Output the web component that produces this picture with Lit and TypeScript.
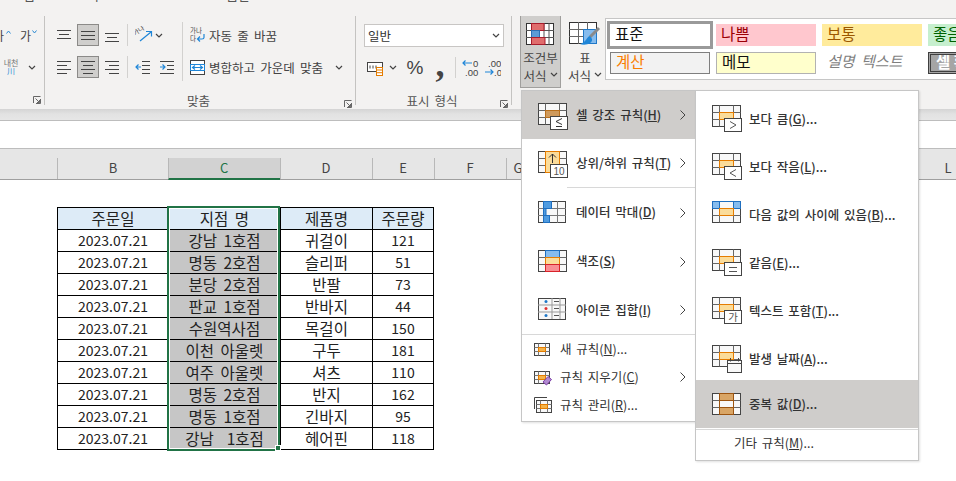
import { LitElement, html, css, svg } from 'lit';
import { customElement } from 'lit/decorators.js';

const rows = [
  ['강남 1호점', '귀걸이', '121'],
  ['명동 2호점', '슬리퍼', '51'],
  ['분당 2호점', '반팔', '73'],
  ['판교 1호점', '반바지', '44'],
  ['수원역사점', '목걸이', '150'],
  ['이천 아울렛', '구두', '181'],
  ['여주 아울렛', '셔츠', '110'],
  ['명동 2호점', '반지', '162'],
  ['명동 1호점', '긴바지', '95'],
  ['강남  1호점', '헤어핀', '118'],
];

const ORANGE = '#e57c00';
const PALE = '#fbdc9a';

// base 3x3 sheet icon, cells are 7/14/7 wide
const sheet = (y = 0) => svg`
  <g transform="translate(0.5 ${y + 0.5})">
    <rect width="28" height="21" fill="#f8f8f8" stroke="#444"></rect>
    <path d="M7 0V21M21 0V21M0 7H28M0 14H28" stroke="#666" fill="none"></path>
  </g>`;

const cell = (fill: string, stroke: string, y = 0) => svg`
  <rect x="7.5" y="${y + 7.5}" width="14" height="7" fill="${fill}" stroke="${stroke}"></rect>`;

const badge = (inner: unknown) => svg`
  <rect x="12.5" y="13.5" width="17" height="13" fill="#fff" stroke="#444"></rect>${inner}`;

const ltMark = svg`<path d="M24 16.5L18 20L24 23.5" fill="none" stroke="#555"></path>`;
const gtMark = svg`<path d="M18 16.5L24 20L18 23.5" fill="none" stroke="#555"></path>`;
const eqMark = svg`<path d="M17 18.5H25M17 22.5H25" fill="none" stroke="#555"></path>`;
const calMark = svg`
  <rect x="15.5" y="15.5" width="14" height="12" fill="#f8f8f8" stroke="#444"></rect>
  <path d="M15.5 18.5H29.5M18.5 13V16.5M26.5 13V16.5" fill="none" stroke="#444"></path>`;

const icon = (body: unknown) => html`<svg class="ic" viewBox="0 0 30 28" width="30" height="28">${body}</svg>`;

const icons: Record<string, unknown> = {
  highlight: icon(svg`${sheet()}${cell('#cf9a5c', '#b86f1c')}${badge(svg`
    <path d="M24 15.5L18 18.5L24 21.5M18 23.5H24" fill="none" stroke="#333"></path>`)}`),
  top: icon(svg`${sheet()}
    <rect x="7.5" y="0.5" width="14" height="21" fill="${PALE}" stroke="${ORANGE}"></rect>
    <path d="M14.5 12V3M11 6.5L14.5 3L18 6.5" fill="none" stroke="#333"></path>
    <rect x="12.5" y="13.5" width="17" height="13" fill="#fff" stroke="#444"></rect>
    <text x="21" y="24" font-size="10" text-anchor="middle" fill="#555" font-family="Liberation Sans">10</text>`),
  bars: icon(svg`
    <rect x="0.5" y="0.5" width="27" height="21" fill="#f8f8f8" stroke="#444"></rect>
    <path d="M5.5 0V22M19.5 0V22M0 7.5H28M0 14.5H28" stroke="#777" fill="none"></path>
    <rect x="5.5" y="0.5" width="8" height="7" fill="#4f9be0" stroke="#1f6fc0"></rect>
    <rect x="5.5" y="7.5" width="2.5" height="7" fill="#4f9be0" stroke="#1f6fc0"></rect>
    <rect x="5.5" y="14.5" width="6" height="7" fill="#4f9be0" stroke="#1f6fc0"></rect>`),
  scale: icon(svg`${sheet()}
    <rect x="7.5" y="0.5" width="14" height="7" fill="#86bcee" stroke="#1f6fc0"></rect>
    ${cell(PALE, ORANGE)}
    <rect x="7.5" y="14.5" width="14" height="7" fill="#f88e93" stroke="#d8232a"></rect>`),
  iconset: icon(svg`
    <rect x="0.5" y="0.5" width="27" height="21" fill="#f8f8f8" stroke="#444"></rect>
    <path d="M14 0V21M22 0V21M0 7H28M0 14H28" stroke="#999" fill="none"></path>
    <circle cx="8" cy="3.5" r="1.5" fill="#1f78c8"></circle>
    <circle cx="8" cy="10.5" r="1.5" fill="#e03030"></circle>
    <circle cx="8" cy="17.5" r="1.5" fill="#1f78c8"></circle>
    <path d="M16 3.5H21M16 10.5H21M16 17.5H21" stroke="#555"></path>`),
  gt: icon(svg`${sheet()}${cell(PALE, ORANGE)}${badge(gtMark)}`),
  lt: icon(svg`${sheet()}${cell(PALE, ORANGE)}${badge(ltMark)}`),
  between: icon(svg`${sheet()}
    <rect x="0.5" y="0.5" width="7" height="7" fill="#86bcee" stroke="#1f6fc0"></rect>
    <rect x="21.5" y="0.5" width="7" height="7" fill="#86bcee" stroke="#1f6fc0"></rect>
    <path d="M7.5 .5H21.5" stroke="#1f6fc0"></path>
    ${cell(PALE, ORANGE)}`),
  eq: icon(svg`${sheet()}${cell(PALE, ORANGE)}${badge(eqMark)}`),
  text: icon(svg`${sheet()}${cell(PALE, ORANGE)}${badge(svg`
    <text x="21" y="24" font-size="10.5" text-anchor="middle" fill="#555" font-family="Noto Sans CJK KR">가</text>`)}`),
  date: icon(svg`${sheet()}${cell(PALE, ORANGE)}${calMark}`),
  dup: icon(svg`${sheet(3)}
    <rect x="7.5" y="3.5" width="14" height="7" fill="#d9a565" stroke="#9c5410"></rect>
    <rect x="7.5" y="17.5" width="14" height="7" fill="#d9a565" stroke="#9c5410"></rect>
    <path d="M7.5 10.5V17.5M21.5 10.5V17.5" stroke="#9c5410"></path>`),
};

const small = (body: unknown) => html`<svg class="ic" viewBox="0 0 18 17" width="18" height="17">${body}</svg>`;
const smallGrid = svg`
  <rect x="0.5" y="2.5" width="15" height="12" fill="#f8f8f8" stroke="#444"></rect>
  <path d="M4.5 2.5V14.5M11.5 2.5V14.5M.5 6.5H15.5M.5 10.5H15.5" stroke="#777" fill="none"></path>
  <rect x="4.5" y="6.5" width="7" height="4" fill="#f5b44a" stroke="${ORANGE}"></rect>`;

const smallIcons: Record<string, unknown> = {
  add: small(smallGrid),
  clear: small(svg`${smallGrid}
    <path d="M9 13L14 7.5L17.5 10.5L12.5 16Z" fill="#b18bd0" stroke="#7d3fa8"></path>`),
  manage: small(svg`
    <path d="M.5 12V.5H13" fill="none" stroke="#444"></path>
    <g transform="translate(2 1)">${smallGrid}</g>`),
};

const mainItems = [
  { icon: 'highlight', label: '셀 강조 규칙', key: 'H', on: true, tall: false },
  { icon: 'top', label: '상위/하위 규칙', key: 'T', on: false, tall: false },
  null,
  { icon: 'bars', label: '데이터 막대', key: 'D', on: false, tall: true },
  { icon: 'scale', label: '색조', key: 'S', on: false, tall: true },
  { icon: 'iconset', label: '아이콘 집합', key: 'I', on: false, tall: false },
];

const smallItems = [
  { icon: 'add', label: '새 규칙', key: 'N', tail: '...', more: false },
  { icon: 'clear', label: '규칙 지우기', key: 'C', tail: '', more: true },
  { icon: 'manage', label: '규칙 관리', key: 'R', tail: '...', more: false },
];

const subItems = [
  { icon: 'gt', label: '보다 큼', key: 'G' },
  { icon: 'lt', label: '보다 작음', key: 'L' },
  { icon: 'between', label: '다음 값의 사이에 있음', key: 'B' },
  { icon: 'eq', label: '같음', key: 'E' },
  { icon: 'text', label: '텍스트 포함', key: 'T' },
  { icon: 'date', label: '발생 날짜', key: 'A' },
  { icon: 'dup', label: '중복 값', key: 'D', on: true },
];

const chevDown = html`<svg class="ic" width="8" height="5" viewBox="0 0 8 5"><path d="M1 1L4 4L7 1" fill="none" stroke="#444" stroke-width="1.2"></path></svg>`;
const chevRight = html`<svg class="ic chev" width="6" height="10" viewBox="0 0 6 10"><path d="M.5 .5L5 5L.5 9.5" fill="none" stroke="#444"></path></svg>`;
const launcher = html`<svg class="ic launcher" width="8" height="8" viewBox="0 0 8 8"><path d="M.5 7V.5H7.5M7.5 3V7.5H3M2.5 2.5L6.5 6.5M6.5 4V6.5H4" fill="none" stroke="#666"></path></svg>`;
const caretUp = html`<svg class="ic" width="5" height="4" viewBox="0 0 5 4"><path d="M.5 3.5L2.5 1L4.5 3.5" fill="none" stroke="#2a8ad4"></path></svg>`;
const caretDown = html`<svg class="ic" width="5" height="4" viewBox="0 0 5 4"><path d="M.5 .5L2.5 3L4.5 .5" fill="none" stroke="#2a8ad4"></path></svg>`;

// lines given as [x1, x2, y] on a 14 wide glyph
const lines = (l: number[][], extra: unknown = '') => html`<svg class="ic" width="16" height="16" viewBox="0 0 16 16">
  ${l.map(([a, b, y]) => svg`<path d="M${a} ${y + 0.5}H${b}" stroke="#444"></path>`)}${extra}
</svg>`;

const blueArrow = (d: string) => svg`<path d="${d}" fill="none" stroke="#1f86d8" stroke-width="1.2"></path>`;

@customElement('app-root')
export class AppRoot extends LitElement {
  static styles = css`
    :host {
      display: block;
      width: 956px;
      height: 481px;
      overflow: hidden;
      position: relative;
      background: #fff;
      font-family: "Noto Sans CJK KR", "Liberation Sans", sans-serif;
      color: #333;
    }
    .ic { display: block; flex: none; }

    .tabs {
      height: 16px;
      overflow: hidden;
      background: #f3f2f1;
      display: flex;
      font-size: 13px;
      line-height: 16px;
      color: #555;
      padding-left: 23px;
      gap: 28px;
    }
    .tabs span { margin-top: -13px; }

    .ribbon {
      display: flex;
      height: 93px;
      background: #f3f2f1;
      padding-bottom: 4px;
      box-sizing: border-box;
      overflow: hidden;
    }
    .group {
      display: flex;
      flex-direction: column;
      box-sizing: border-box;
      border-right: 1px solid #c4c3c1;
      flex: none;
      height: 89px;
    }
    .group-main { height: 76px; padding-top: 8px; box-sizing: border-box; display: flex; flex: none; }
    .group-foot {
      display: grid;
      grid-template-columns: 1fr auto 1fr;
      align-items: start;
      height: 13px;
      font-size: 12.5px;
      line-height: 17px;
      color: #555;
      word-spacing: 2px;
      padding-right: 3px;
    }
    .launcher { justify-self: end; grid-column: 3; align-self: end; margin-bottom: 1px; }
    .group-foot span { grid-column: 2; }
    .g-font { width: 45px; }
    .g-align { width: 311px; }
    .g-num { width: 156px; }
    .g-style { flex: 1; display: flex; flex-direction: row; border-right: 0; padding-left: 8px; }

    .font-col { display: flex; flex-direction: column; gap: 10px; width: 100%; font-size: 12px; }
    .font-row { height: 22px; display: flex; align-items: center; color: #444; }
    .clip-ga { margin-left: -7px; width: 13px; overflow: hidden; flex: none; }
    .ga-up { margin: -7px 9px 0 0; }
    .ga-down { margin: -7px 0 0 1px; }
    .naecheon { font-size: 8px; line-height: 8px; text-align: center; width: 18px; margin-left: 2px; color: #777; margin-right: 8px; }
    .naecheon b { display: block; font-weight: 400; color: #2a8ad4; }

    .al-grid { display: grid; grid-template-columns: repeat(3, 24px); grid-auto-rows: 22px; row-gap: 10px; margin-left: 7px; }
    .al { display: flex; align-items: center; justify-content: center; width: 22px; height: 22px; margin-left: 1px; box-sizing: border-box; }
    .al.on { background: #cfcecc; border: 1px solid #8b8a88; }
    .vsep { width: 1px; background: #d2d1cf; height: 59px; margin: -2px 7px 0 3px; flex: none; }
    .vsep.broken {
      height: 54px;
      margin-top: 0;
      background: linear-gradient(#d2d1cf 0 22px, transparent 22px 32px, #d2d1cf 32px);
    }
    .col-b { display: flex; flex-direction: column; gap: 10px; width: 44px; }
    .b-row { height: 22px; display: flex; align-items: center; gap: 0; }
    .b-row.split { gap: 8px; }
    .col-c { display: flex; flex-direction: column; gap: 10px; font-size: 12.5px; color: #444; word-spacing: 2.5px; white-space: nowrap; }
    .c-row { height: 22px; display: flex; align-items: center; gap: 4px; }
    .merge-chev { margin-left: 8px; }

    .num { display: flex; flex-direction: column; padding-left: 8px; gap: 9px; width: 147px; box-sizing: border-box; }
    .select {
      width: 140px; height: 23px; background: #fff; border: 1px solid #c8c6c4; box-sizing: border-box;
      display: flex; align-items: center; justify-content: space-between; padding: 0 3px 0 3px; font-size: 12.5px; color: #333;
    }
    .num-row { height: 23px; display: flex; align-items: center; padding-left: 3px; color: #444; }
    .fmt-chev { margin-left: 4px; }
    .pct { font-size: 19px; width: 24px; text-align: center; margin-left: 6px; font-family: "Liberation Sans", sans-serif; font-weight: 400; }
    .comma { font-size: 36px; font-weight: 700; width: 26px; height: 23px; text-align: center; font-family: "Liberation Serif", serif; line-height: 16px; }
    .num-row .vsep { height: 21px; margin: 0 6px 0 2px; }
    .dec-right { margin-left: 5px; }

    .big-btn {
      width: 41px; height: 73px; margin-top: -1px; box-sizing: border-box; flex: none;
      display: flex; flex-direction: column; align-items: center; padding-top: 7px;
      font-size: 12.5px; line-height: 18px; color: #444; text-align: center;
    }
    .big-btn.on { background: #cfcecc; border: 1px solid #a09f9d; }
    .big-btn svg { margin-bottom: 3px; }
    .big-label { display: flex; align-items: center; gap: 3px; white-space: nowrap; }
    .btn-table { width: 41px; margin-left: 2px; padding-left: 3px; }

    .gallery {
      margin: 2px 0 0 1px;
      height: 62px;
      flex: 1;
      background: #fff;
      border: 1px solid #c6c6c6;
      border-right: 0;
      box-sizing: border-box;
      display: grid;
      grid-template-columns: repeat(4, 100px);
      grid-auto-rows: 22px;
      gap: 6px;
      padding: 5px 0 0 4px;
      font-size: 15.5px;
      overflow: hidden;
    }
    .st { box-sizing: border-box; padding-left: 5px; line-height: 18px; white-space: nowrap; overflow: hidden; }
    .st.norm { background: #fff; outline: 3px solid #9a9a9a; color: #111; }
    .st.bad { background: #ffc7ce; color: #9c0006; }
    .st.neutral { background: #ffeb9c; color: #9c5700; }
    .st.good { background: #c6efce; color: #006100; }
    .st.calc { background: #f2f2f2; border: 1px solid #7f7f7f; color: #fa7d00; line-height: 16px; }
    .st.note { background: #ffffcc; border: 1px solid #b2b2b2; color: #111; line-height: 16px; }
    .st.expl { color: #7f7f7f; font-style: italic; font-size: 15px; word-spacing: 3px; }
    .st.check { background: #a5a5a5; border: 3px double #3f3f3f; color: #fff; font-weight: 700; line-height: 13px; }

    .strip {
      height: 12px;
      background: linear-gradient(#d4d4d4 0, #e2e2e2 5px, #e6e6e6 100%);
      border-bottom: 1px solid #bdbdbd;
      box-sizing: border-box;
    }
    .fbar { height: 27px; border-bottom: 1px solid #bdbdbd; box-sizing: content-box; }
    .colhead {
      height: 31px;
      background: #e6e6e6;
      border-bottom: 1px solid #9f9f9f;
      box-sizing: border-box;
      display: flex;
      align-items: flex-end;
      font-size: 13px;
      color: #444;
      padding-left: 57px;
    }
    .ch {
      height: 21px;
      width: var(--w);
      flex: none;
      box-sizing: border-box;
      border-left: 1px solid #b8b8b8;
      text-align: center;
      line-height: 20px;
    }
    .ch.sel { background: #d2d2d2; color: #217346; border-bottom: 2px solid #217346; margin-bottom: -1px; height: 22px; }

    .sheet { padding: 27px 0 0 57px; position: relative; }
    .table-wrap { position: relative; width: 376px; }
    table { border-collapse: collapse; table-layout: fixed; width: 376px; color: #222; }
    td, th {
      border: 1px solid #000;
      height: 22px;
      padding: 0 0 2px;
      box-sizing: border-box;
      text-align: center;
      font-size: 15.5px;
      font-weight: 400;
      line-height: 18px;
      white-space: pre;
      word-spacing: 3px;
    }
    th { background: #ddebf7; }
    td.d { font-size: 14px; word-spacing: 0; }
    td.s { background: #c6c6c6; }
    .c-b { width: 111px; }
    .c-c { width: 112px; }
    .c-d { width: 92px; }
    .c-e { width: 61px; }
    .selection {
      position: absolute;
      left: 110px;
      top: -1px;
      width: 113px;
      height: 245px;
      box-sizing: border-box;
      border: 2px solid #217346;
      box-shadow: inset 0 0 0 1px #fff;
      pointer-events: none;
    }
    .handle {
      position: absolute;
      right: -3px;
      bottom: -2px;
      width: 6px;
      height: 6px;
      box-sizing: border-box;
      background: #217346;
      border: 1px solid #fff;
    }

    .menu {
      position: absolute;
      background: #fff;
      border: 1px solid #c6c6c6;
      box-shadow: 1px 1px 2px rgba(0, 0, 0, .12);
      box-sizing: border-box;
      font-size: 12.5px;
      word-spacing: 2px;
      color: #333;
      white-space: nowrap;
    }
    .main { left: 521px; top: 90px; width: 175px; height: 332px; }
    .sub { left: 695px; top: 90px; width: 224px; height: 371px; padding-top: 4px; }
    .item { display: flex; align-items: center; box-sizing: border-box; }
    .item.big { height: 48px; padding-left: 16px; gap: 8px; }
    .item.big .ic:first-child { margin-top: 4px; }
    .item.big.tall { height: 49px; }
    .item.on { background: #cfcdcb; }
    .label { flex: 1; font-weight: 500; padding-bottom: 2px; }
    .chev { margin-right: 9px; }
    .rule { height: 1px; background: #d8d8d8; flex: none; }
    .rule.inset { margin-left: 45px; }
    .item.tiny { height: 28px; padding-left: 12px; gap: 8px; }
    .item.tiny .label, .other .label { font-weight: 400; }
    .sub .item { height: 48px; padding-left: 16px; gap: 7px; }
    .sub .item.dup { margin-top: -3px; }
    .sub .rule { margin-top: 1px; }
    .sub .other { height: 27px; padding-left: 38px; }
    u { text-underline-offset: 1px; }
  `;

  private accel(label: string, key: string, tail = '') {
    return html`${label}(<u>${key}</u>)${tail}`;
  }

  render() {
    return html`
      <div class="tabs"><span>검토</span><span>보기</span><span>Automate</span><span>도움말</span></div>
      ${this.renderRibbon()}
      <div class="strip"></div>
      <div class="fbar"></div>
      <div class="colhead">
        ${[['B', 111], ['C', 111.5], ['D', 92], ['E', 62], ['F', 72], ['G', 24]].map(
          ([c, w]) => html`<div class="ch ${c === 'C' ? 'sel' : ''}" style="--w:${w}px">${c}</div>`,
        )}
        <div class="ch" style="--w:368px"></div>
        <div class="ch" style="--w:100px">L</div>
      </div>
      <div class="sheet">
        <div class="table-wrap">
          <table>
            <colgroup><col class="c-b" /><col class="c-c" /><col class="c-d" /><col class="c-e" /></colgroup>
            <tr><th>주문일</th><th>지점 명</th><th>제품명</th><th>주문량</th></tr>
            ${rows.map(
              ([branch, product, qty]) => html`<tr>
                <td class="d">2023.07.21</td><td class="s">${branch}</td><td>${product}</td><td class="d">${qty}</td>
              </tr>`,
            )}
          </table>
          <div class="selection"><div class="handle"></div></div>
        </div>
      </div>
      ${this.renderMainMenu()} ${this.renderSubMenu()}
    `;
  }

  private renderRibbon() {
    return html`<div class="ribbon">
      <div class="group g-font">
        <div class="group-main">
          <div class="font-col">
            <div class="font-row">
              <span class="clip-ga">가</span><span class="ga-up">${caretUp}</span>
              <span>가</span><span class="ga-down">${caretDown}</span>
            </div>
            <div class="font-row"><span class="naecheon">내천<b>川</b></span>${chevDown}</div>
          </div>
        </div>
        <div class="group-foot">${launcher}</div>
      </div>

      <div class="group g-align">
        <div class="group-main">
          <div class="al-grid">
            <div class="al">${lines([[1, 15, 3], [3, 13, 7], [1, 15, 11]])}</div>
            <div class="al on">${lines([[1, 15, 4], [1, 15, 8], [1, 15, 12]])}</div>
            <div class="al">${lines([[1, 15, 6], [3, 13, 10], [1, 15, 14]])}</div>
            <div class="al">${lines([[1, 15, 2], [1, 11, 6], [1, 15, 10], [1, 11, 14]])}</div>
            <div class="al on">${lines([[1, 15, 2], [3, 13, 6], [1, 15, 10], [3, 13, 14]])}</div>
            <div class="al">${lines([[1, 15, 2], [5, 15, 6], [1, 15, 10], [5, 15, 14]])}</div>
          </div>
          <div class="vsep broken"></div>
          <div class="col-b">
            <div class="b-row">
              <svg class="ic" width="20" height="18" viewBox="0 0 20 18">
                <text transform="translate(0 10) rotate(-35)" font-size="6.5" fill="#444" font-family="Noto Sans CJK KR">가나</text>
                ${blueArrow('M5 15L16 6M11 5.5H16.5V10.5')}
              </svg>
              ${chevDown}
            </div>
            <div class="b-row split">
              ${lines([[7, 15, 2], [7, 15, 6], [7, 15, 10], [7, 15, 14]], blueArrow('M1 8H6M3.5 5.5L1 8L3.5 10.5'))}
              ${lines([[1, 15, 2], [8, 15, 6], [8, 15, 10], [1, 15, 14]], blueArrow('M1 8H6M3.5 5.5L6 8L3.5 10.5'))}
            </div>
          </div>
          <div class="vsep"></div>
          <div class="col-c">
            <div class="c-row">
              <svg class="ic" width="15" height="18" viewBox="0 0 15 18">
                <text x="0" y="7" font-size="6.5" fill="#444" font-family="Noto Sans CJK KR">가나</text>
                <text x="0" y="15" font-size="6.5" fill="#444" font-family="Noto Sans CJK KR">다</text>
                ${blueArrow('M14 8V11.5Q14 13 12 13H7.5M10 10.5L7.5 13L10 15.5')}
              </svg>
              자동 줄 바꿈
            </div>
            <div class="c-row">
              <svg class="ic" width="15" height="15" viewBox="0 0 15 15">
                <rect x=".5" y=".5" width="14" height="14" fill="#fff" stroke="#444"></rect>
                <rect x=".5" y="4.5" width="14" height="6" fill="#fff" stroke="#1f86d8"></rect>
                ${blueArrow('M2.5 7.5H12.5M5 5.5L2.5 7.5L5 9.5M10 5.5L12.5 7.5L10 9.5')}
              </svg>
              병합하고 가운데 맞춤
              <span class="merge-chev">${chevDown}</span>
            </div>
          </div>
        </div>
        <div class="group-foot"><span>맞춤</span>${launcher}</div>
      </div>

      <div class="group g-num">
        <div class="group-main">
          <div class="num">
            <div class="select">일반 ${chevDown}</div>
            <div class="num-row">
              <svg class="ic" width="18" height="16" viewBox="0 0 18 16">
                <rect x=".5" y="2.5" width="15" height="9" fill="#fff" stroke="#444"></rect>
                <path d="M3 5.5V8.5M6 5.5V8.5M9 5.5V8.5" stroke="#444"></path>
                <rect x="9.5" y="7.5" width="6" height="8" fill="#fff" stroke="#e57c00"></rect>
                <path d="M9.5 10H15.5M9.5 12.7H15.5" stroke="#e57c00"></path>
              </svg>
              <span class="fmt-chev">${chevDown}</span>
              <span class="pct">%</span>
              <span class="comma">,</span>
              <div class="vsep"></div>
              <svg class="ic" width="17" height="18" viewBox="0 0 17 18">
                <text x="11" y="8" font-size="9.5" fill="#444" font-family="Liberation Sans">0</text>
                <text x="3" y="17" font-size="9.5" fill="#444" font-family="Liberation Sans">.00</text>
                ${blueArrow('M10 4H1M3.5 1.5L1 4L3.5 6.5')}
              </svg>
              <svg class="ic dec-right" width="17" height="18" viewBox="0 0 17 18">
                <text x="4" y="8" font-size="9.5" fill="#444" font-family="Liberation Sans">.00</text>
                <text x="10" y="17" font-size="9.5" fill="#444" font-family="Liberation Sans">.0</text>
                ${blueArrow('M1 13H9M6.5 10.5L9 13L6.5 15.5')}
              </svg>
            </div>
          </div>
        </div>
        <div class="group-foot"><span>표시 형식</span>${launcher}</div>
      </div>

      <div class="group g-style">
        <div class="big-btn on">
          <svg class="ic" width="29" height="23" viewBox="0 0 29 23">
            <rect x=".5" y=".5" width="27" height="21" fill="#fff" stroke="#333"></rect>
            <path d="M5.5 0V22M18 0V22M23 0V22M0 7.5H28M0 14.5H28" stroke="#555" fill="none"></path>
            <rect x="5.5" y=".5" width="12.5" height="7" fill="#e06c6c" stroke="#a81c2c"></rect>
            <rect x="5.5" y="7.5" width="8" height="7" fill="#5b9bd5" stroke="#2b6fb5"></rect>
            <rect x="5.5" y="14.5" width="13.5" height="7" fill="#e06c6c" stroke="#a81c2c"></rect>
          </svg>
          <span>조건부</span>
          <span class="big-label">서식 ${chevDown}</span>
        </div>
        <div class="big-btn btn-table">
          <svg class="ic" width="33" height="24" viewBox="0 0 33 24">
            <rect x=".5" y=".5" width="27" height="21" fill="#fff" stroke="#333"></rect>
            <path d="M9.5 0V22M18.5 0V22M0 7.5H28M0 14.5H28" stroke="#666" fill="none"></path>
            <rect x="14.5" y="7.5" width="13" height="14" fill="#86bcee" stroke="#1f78c8"></rect>
            <path d="M30 6L21 15" stroke="#8a8a8a" stroke-width="3"></path>
            <path d="M21 14C17 15 18 20 11 22C17 24 24 21 23 17Z" fill="#1f86d8"></path>
          </svg>
          <span>표</span>
          <span class="big-label">서식 ${chevDown}</span>
        </div>
        <div class="gallery">
          <div class="st norm">표준</div>
          <div class="st bad">나쁨</div>
          <div class="st neutral">보통</div>
          <div class="st good">좋음</div>
          <div class="st calc">계산</div>
          <div class="st note">메모</div>
          <div class="st expl">설명 텍스트</div>
          <div class="st check">셀 확인</div>
        </div>
      </div>
    </div>`;
  }

  private renderMainMenu() {
    return html`<div class="menu main">
      ${mainItems.map((m) =>
        m
          ? html`<div class="item big ${m.on ? 'on' : ''} ${m.tall ? 'tall' : ''}">
              ${icons[m.icon]}
              <span class="label">${this.accel(m.label, m.key)}</span>
              ${chevRight}
            </div>`
          : html`<div class="rule inset"></div>`,
      )}
      <div class="rule"></div>
      ${smallItems.map(
        (m) => html`<div class="item tiny">
          ${smallIcons[m.icon]}
          <span class="label">${this.accel(m.label, m.key, m.tail)}</span>
          ${m.more ? chevRight : ''}
        </div>`,
      )}
    </div>`;
  }

  private renderSubMenu() {
    return html`<div class="menu sub">
      ${subItems.map(
        (m) => html`<div class="item ${m.on ? 'on dup' : ''}">
          ${icons[m.icon]}
          <span class="label">${this.accel(m.label, m.key, '...')}</span>
        </div>`,
      )}
      <div class="rule"></div>
      <div class="item other"><span class="label">${this.accel('기타 규칙', 'M', '...')}</span></div>
    </div>`;
  }
}
